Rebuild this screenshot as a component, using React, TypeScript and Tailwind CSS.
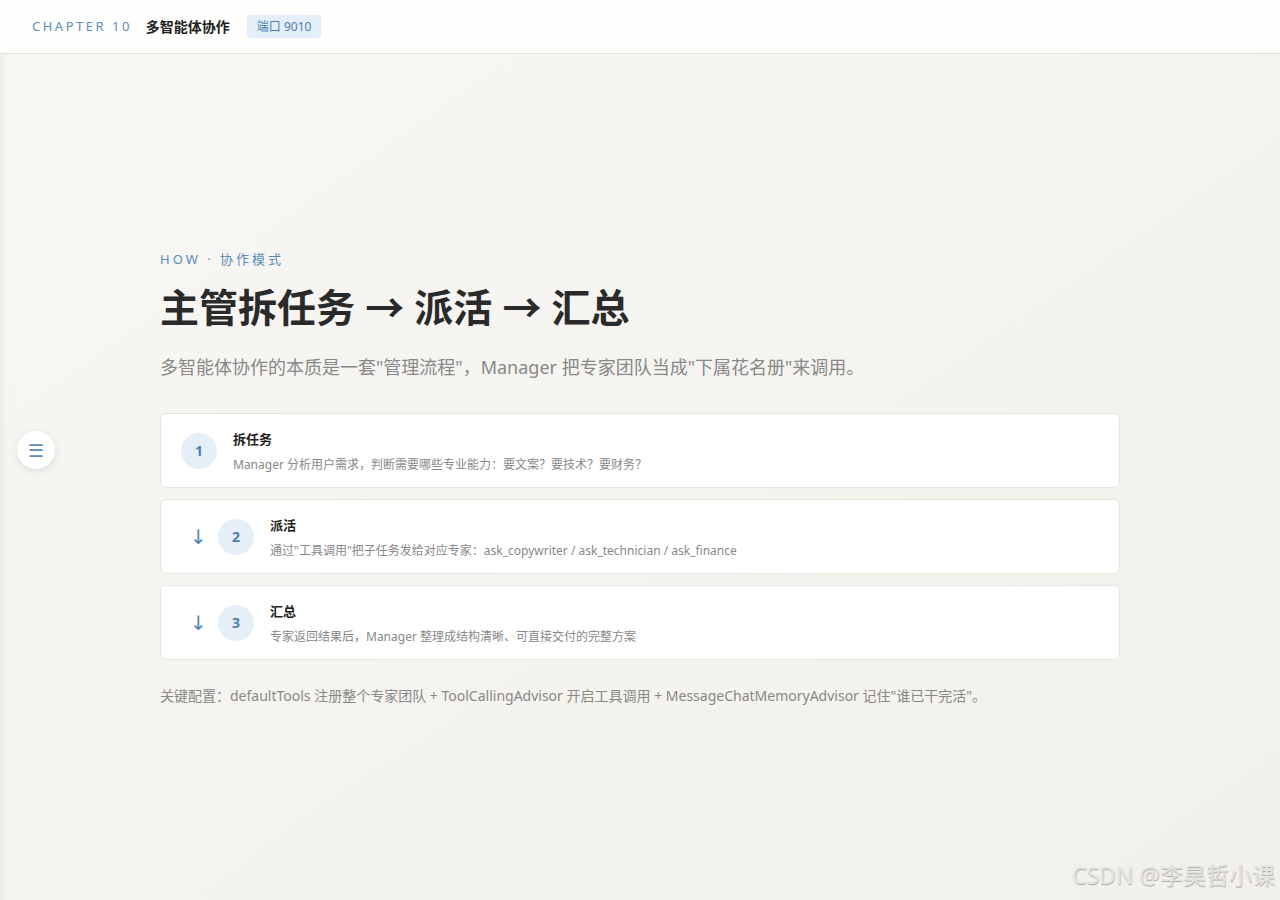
import React from 'react';

const font = { fontFamily: '"Noto Sans", "Noto Sans CJK SC", sans-serif' };

const steps = [
	{ n: 1, title: '拆任务', desc: 'Manager 分析用户需求，判断需要哪些专业能力：要文案？要技术？要财务？' },
	{ n: 2, title: '派活', desc: '通过"工具调用"把子任务发给对应专家：ask_copywriter / ask_technician / ask_finance' },
	{ n: 3, title: '汇总', desc: '专家返回结果后，Manager 整理成结构清晰、可直接交付的完整方案' },
];

function StepCard({ n, title, desc }: { n: number; title: string; desc: string }) {
	return (
		<div className="flex items-center gap-4 h-[75px] pl-5 pr-5 bg-white border border-[#e8e5de] rounded-md">
			{n > 1 && (
				<span
					className="ml-[9px] -mr-[1px] w-[13px] text-[20px] leading-none text-[#4f86b8]"
					style={{ fontFamily: '"DejaVu Sans", sans-serif' }}
				>
					↓
				</span>
			)}
			<div className="w-9 h-9 shrink-0 rounded-full bg-[#e6eef7] flex items-center justify-center text-[14px] font-bold text-[#4a7fb0]">
				{n}
			</div>
			<div className="flex flex-col gap-[8px] pt-[1px]">
				<div className="text-[13px] font-bold text-[#222] leading-5">{title}</div>
				<div className="text-[12px] text-[#888] leading-4">{desc}</div>
			</div>
		</div>
	);
}

export default function App() {
	return (
		<div
			className="relative min-h-screen flex flex-col bg-gradient-to-br from-[#f8f7f4] to-[#f2f0ea] shadow-[inset_10px_0_12px_-10px_rgba(0,0,0,0.08)]"
			style={font}
		>
			<header className="h-[54px] shrink-0 flex items-center gap-[14px] px-8 bg-[#fefefd] border-b border-[#e4e1da]">
				<span className="text-[13px] tracking-[2.5px] text-[#5b8db8]">CHAPTER 10</span>
				<span className="text-[14px] font-bold text-[#222]">多智能体协作</span>
				<span className="ml-[3px] px-[10px] h-[23px] flex items-center rounded bg-[#e3eef8] text-[12px] text-[#4a7fb0]">
					端口 9010
				</span>
			</header>

			<main className="flex-1 pt-[195px]">
				<div className="w-[960px] ml-[160px]">
					<div className="text-[13px] tracking-[3px] text-[#5a8cba] leading-5">HOW · 协作模式</div>
					<h1 className="mt-[14px] text-[39px] font-bold text-[#2a2a2a] leading-[48px]">
						主管拆任务 → 派活 → 汇总
					</h1>
					<p className="mt-[24px] text-[18px] text-[#888] leading-6">
						多智能体协作的本质是一套"管理流程"，Manager 把专家团队当成"下属花名册"来调用。
					</p>
					<div className="mt-[34px] flex flex-col gap-[11px]">
						{steps.map((s) => (
							<StepCard key={s.n} {...s} />
						))}
					</div>
					<p className="mt-[26px] text-[14px] text-[#888] leading-5">
						关键配置：defaultTools 注册整个专家团队 + ToolCallingAdvisor 开启工具调用 + MessageChatMemoryAdvisor 记住"谁已干完活"。
					</p>
				</div>
			</main>

			<button className="absolute left-[17px] top-[431px] w-[38px] h-[38px] rounded-full bg-white shadow-[0_2px_8px_rgba(0,0,0,0.1)] flex items-center justify-center text-[18px] text-[#5b8db8]">
				☰
			</button>

			<div className="absolute right-[5px] bottom-[8px] text-[23px] font-normal text-[#e4e4e4] [text-shadow:0.5px_0.5px_1px_rgba(0,0,0,0.3)]">
				CSDN @李昊哲小课
			</div>
		</div>
	);
}
